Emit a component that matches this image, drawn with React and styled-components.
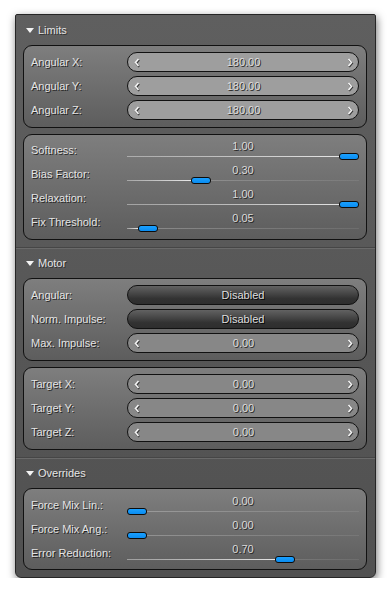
import React from 'react';
import styled, { createGlobalStyle } from 'styled-components';

const GlobalStyle = createGlobalStyle`
  html, body {
    margin: 0;
    padding: 0;
    background: #ffffff;
  }
  body {
    font-family: "Liberation Sans", Arial, sans-serif;
    font-size: 11px;
  }
`;

const Panel = styled.div`
  margin: 14px 0 0 15px;
  width: 361px;
  height: 564px;
  box-sizing: border-box;
  background: linear-gradient(#5f5f5f, #565656 60%, #515151);
  border: 1px solid #262626;
  border-radius: 2px 2px 6px 6px;
  box-shadow: 1px 3px 8px rgba(0, 0, 0, 0.55);
  display: flex;
  flex-direction: column;
  overflow: hidden;
`;

const Section = styled.div`
  display: flex;
  flex-direction: column;
  gap: 6px;
  padding: 0 8px 7px 7px;
  border-bottom: ${({ $last }) => ($last ? 'none' : '1px solid #464646')};
  box-shadow: ${({ $last }) => ($last ? 'none' : '0 1px 0 #6a6a6a')};
`;

const Header = styled.div`
  height: 30px;
  display: flex;
  align-items: center;
  gap: 4px;
  padding-left: 3px;
  color: #e6e6e6;
  text-shadow: 1px 1px 0 rgba(0, 0, 0, 0.5);
  margin-bottom: -6px;
`;

const Triangle = styled.span`
  width: 0;
  height: 0;
  border-left: 4px solid transparent;
  border-right: 4px solid transparent;
  border-top: 5px solid #f4f4f4;
  margin-top: 1px;
`;

const Group = styled.div`
  border: 1px solid #111;
  border-radius: 9px;
  background: linear-gradient(#7e7e7e, #6c6c6c 55%, #5d5d5d);
  padding: ${({ $pad }) => $pad || '4px 7px 5px 7px'};
  display: flex;
  flex-direction: column;
`;

const Row = styled.div`
  height: 24px;
  display: grid;
  grid-template-columns: 96px 1fr;
  align-items: center;
`;

const Label = styled.div`
  color: #e4e4e4;
  text-shadow: 1px 1px 0 rgba(20, 20, 20, 0.85);
  white-space: nowrap;
`;

const Spinner = styled.div`
  height: 20px;
  box-sizing: border-box;
  border: 1px solid #111;
  border-radius: 10px;
  background: ${({ $bright }) => ($bright ? '#9e9e9e' : '#878787')};
  display: flex;
  align-items: center;
  justify-content: space-between;
  padding: 0 5px 0 6px;
`;

const SpinValue = styled.span`
  color: #dcdcdc;
  text-shadow: 1px 1px 0 #2a2a2a;
`;

const DarkButton = styled.div`
  height: 20px;
  box-sizing: border-box;
  border: 1px solid #111;
  border-radius: 10px;
  background: linear-gradient(#626262, #444 45%, #323232 70%, #2e2e2e);
  color: #dedede;
  text-shadow: 1px 1px 0 rgba(0, 0, 0, 0.9);
  display: flex;
  align-items: center;
  justify-content: center;
`;

const SliderBox = styled.div`
  position: relative;
  height: 24px;
`;

const SliderValue = styled.div`
  position: absolute;
  left: 0;
  right: 0;
  top: 2px;
  text-align: center;
  color: #dadada;
  text-shadow: 1px 1px 0 rgba(30, 30, 30, 0.9);
`;

const Track = styled.div`
  position: absolute;
  left: 0;
  right: 0;
  top: 18px;
  height: 1px;
  background: linear-gradient(to right, rgba(255, 255, 255, 0.28), rgba(255, 255, 255, 0.08));
`;

const TrackFill = styled.div`
  position: absolute;
  left: 0;
  top: 0;
  height: 1px;
  background: linear-gradient(to right, rgba(255, 255, 255, 0.15), rgba(255, 255, 255, 0.85));
`;

const Thumb = styled.div`
  position: absolute;
  top: 15px;
  width: 20px;
  height: 7px;
  box-sizing: border-box;
  border: 1px solid #0c0c0c;
  border-radius: 3px;
  background: linear-gradient(#1aa0ff, #0a8cf0);
`;

const Chevron = ({ right }) => (
  <svg width="6" height="9" viewBox="0 0 6 9" style={{ overflow: 'visible' }}>
    <path
      d={right ? 'M1.5 1 L4.5 4.5 L1.5 8' : 'M4.5 1 L1.5 4.5 L4.5 8'}
      fill="none"
      stroke="#3a3a3a"
      strokeWidth="2"
      transform="translate(0.6 0.8)"
    />
    <path
      d={right ? 'M1.5 1 L4.5 4.5 L1.5 8' : 'M4.5 1 L1.5 4.5 L4.5 8'}
      fill="none"
      stroke="#f4f4f4"
      strokeWidth="1.6"
    />
  </svg>
);

const SpinRow = ({ label, value, bright }) => (
  <Row>
    <Label>{label}</Label>
    <Spinner $bright={bright}>
      <Chevron />
      <SpinValue>{value}</SpinValue>
      <Chevron right />
    </Spinner>
  </Row>
);

const ButtonRow = ({ label, value }) => (
  <Row>
    <Label>{label}</Label>
    <DarkButton>{value}</DarkButton>
  </Row>
);

const SliderRow = ({ label, value }) => {
  const v = parseFloat(value);
  return (
    <Row>
      <Label>{label}</Label>
      <SliderBox>
        <SliderValue>{value}</SliderValue>
        <Track>
          <TrackFill style={{ width: `${v * 100}%` }} />
        </Track>
        <Thumb style={{ left: `calc(${v} * (100% - 20px))` }} />
      </SliderBox>
    </Row>
  );
};

const SectionHeader = ({ title }) => (
  <Header>
    <Triangle />
    <span>{title}</span>
  </Header>
);

export default function App() {
  return (
    <>
      <GlobalStyle />
      <Panel>
        <Section>
          <SectionHeader title="Limits" />
          <Group>
            <SpinRow label="Angular X:" value="180.00" bright />
            <SpinRow label="Angular Y:" value="180.00" bright />
            <SpinRow label="Angular Z:" value="180.00" bright />
          </Group>
          <Group $pad="3px 7px 5px 7px">
            <SliderRow label="Softness:" value="1.00" />
            <SliderRow label="Bias Factor:" value="0.30" />
            <SliderRow label="Relaxation:" value="1.00" />
            <SliderRow label="Fix Threshold:" value="0.05" />
          </Group>
        </Section>
        <Section>
          <SectionHeader title="Motor" />
          <Group>
            <ButtonRow label="Angular:" value="Disabled" />
            <ButtonRow label="Norm. Impulse:" value="Disabled" />
            <SpinRow label="Max. Impulse:" value="0.00" />
          </Group>
          <Group>
            <SpinRow label="Target X:" value="0.00" />
            <SpinRow label="Target Y:" value="0.00" />
            <SpinRow label="Target Z:" value="0.00" />
          </Group>
        </Section>
        <Section $last>
          <SectionHeader title="Overrides" />
          <Group $pad="4px 7px 4px 7px">
            <SliderRow label="Force Mix Lin.:" value="0.00" />
            <SliderRow label="Force Mix Ang.:" value="0.00" />
            <SliderRow label="Error Reduction:" value="0.70" />
          </Group>
        </Section>
      </Panel>
    </>
  );
}
